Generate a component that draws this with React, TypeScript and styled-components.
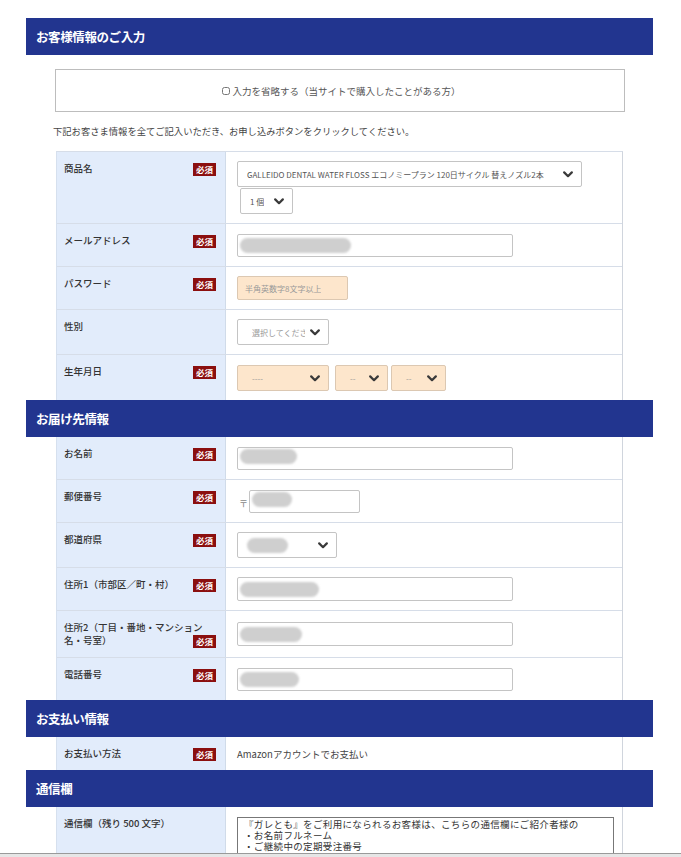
import React from "react"
import styled, { createGlobalStyle } from "styled-components"

const GlobalStyle = createGlobalStyle`
  html, body {
    margin: 0;
    padding: 0;
    background: #fff;
  }
  body {
    font-family: "Noto Sans CJK JP", "Noto Sans", sans-serif;
    color: #333;
  }
`;

function Chevron({ size = 10 }: { size?: number }) {
  return (
    <svg width={size} height={size * 0.7} viewBox="0 0 10 7">
      <path d="M1.2 1.4 L5 5.2 L8.8 1.4" fill="none" stroke="#3a3a3a" strokeWidth="2.2" strokeLinecap="round" strokeLinejoin="round" />
    </svg>
  )
}

function Badge() {
  return <Required>必須</Required>
}

interface Field {
  label: string;
  required?: boolean;
  compact?: boolean;
  content: React.ReactNode;
}

function FormRows({ fields, first }: { fields: Field[]; first?: boolean }) {
  return (
    <Table $first={first}>
      {fields.map((f, i) => (
        <Row key={i}>
          <LabelCell>
            {f.label}
            {f.required && <Badge />}
          </LabelCell>
          <ValueCell $compact={f.compact}>{f.content}</ValueCell>
        </Row>
      ))}
    </Table>
  )
}

export default function App() {
  const customer: Field[] = [
    {
      label: "商品名",
      required: true,
      content: (
        <>
          <SelectBox width={345} height={26}>
            <span>GALLEIDO DENTAL WATER FLOSS エコノミープラン 120日サイクル 替えノズル2本</span>
            <Chevron />
          </SelectBox>
          <SelectBox width={53} height={26} $shift={3} $top={1}>
            <span>1 個</span>
            <Chevron />
          </SelectBox>
        </>
      ),
    },
    {
      label: "メールアドレス",
      required: true,
      content: (
        <InputBox width={276} $top={1}>
          <Blur width={111} />
        </InputBox>
      ),
    },
    {
      label: "パスワード",
      required: true,
      content: (
        <InputBox width={111} height={24} $peach>
          <Placeholder>半角英数字8文字以上</Placeholder>
        </InputBox>
      ),
    },
    {
      label: "性別",
      content: (
        <SelectBox width={92} height={26}>
          <Placeholder>選択してください</Placeholder>
          <Chevron />
        </SelectBox>
      ),
    },
    {
      label: "生年月日",
      required: true,
      content: (
        <Inline>
          <SelectBox width={92} height={26} $peach $top={1}>
            <Placeholder>----</Placeholder>
            <Chevron />
          </SelectBox>
          <SelectBox width={53} height={26} $peach $shift={6} $top={1}>
            <Placeholder>--</Placeholder>
            <Chevron />
          </SelectBox>
          <SelectBox width={55} height={26} $peach $shift={3} $top={1}>
            <Placeholder>--</Placeholder>
            <Chevron />
          </SelectBox>
        </Inline>
      ),
    },
  ];

  const delivery: Field[] = [
    { label: "お名前", required: true, content: <InputBox width={276} $top={1}><Blur width={57} $raised /></InputBox> },
    {
      label: "郵便番号",
      required: true,
      content: (
        <Inline>
          <Postal>〒</Postal>
          <InputBox width={111} $top={1}><Blur width={40} $raised /></InputBox>
        </Inline>
      ),
    },
    {
      label: "都道府県",
      required: true,
      content: (
        <SelectBox width={100} height={26}>
          <Blur width={41} />
          <Chevron />
        </SelectBox>
      ),
    },
    { label: "住所1（市部区／町・村）", required: true, content: <InputBox width={276} height={24}><Blur width={79} /></InputBox> },
    { label: "住所2（丁目・番地・マンション名・号室）", required: true, content: <InputBox width={276} height={24} $top={2}><Blur width={62} /></InputBox> },
    { label: "電話番号", required: true, content: <InputBox width={276} $top={1}><Blur width={59} /></InputBox> },
  ];

  const payment: Field[] = [
    { label: "お支払い方法", required: true, compact: true, content: <PlainText>Amazonアカウントでお支払い</PlainText> },
  ];

  const memo: Field[] = [
    {
      label: "通信欄（残り 500 文字）",
      content: (
        <Memo
          readOnly
          defaultValue={"『ガレとも』をご利用になられるお客様は、こちらの通信欄にご紹介者様の\n・お名前フルネーム\n・ご継続中の定期受注番号\nの2点をご記入ください。"}
        />
      ),
    },
  ];

  return (
    <Page>
      <GlobalStyle />
      <SectionTitle>お客様情報のご入力</SectionTitle>
      <SkipBox>
        <Check type="checkbox" />
        入力を省略する（当サイトで購入したことがある方）
      </SkipBox>
      <Lead>下記お客さま情報を全てご記入いただき、お申し込みボタンをクリックしてください。</Lead>
      <FormRows fields={customer} first />
      <SectionTitle>お届け先情報</SectionTitle>
      <FormRows fields={delivery} />
      <SectionTitle>お支払い情報</SectionTitle>
      <FormRows fields={payment} />
      <SectionTitle>通信欄</SectionTitle>
      <FormRows fields={memo} />
      <BottomEdge />
    </Page>
  )
}

const Page = styled.div`
  width: 627px;
  padding: 18px 28px 0 26px;
  height: 839px;
  overflow: hidden;
`;

const SectionTitle = styled.div`
  background: #22358f;
  color: #fff;
  height: 37px;
  line-height: 37px;
  padding-left: 10px;
  font-size: 12.5px;
  font-weight: 700;
  letter-spacing: -0.4px;
`;

const SkipBox = styled.label`
  display: flex;
  align-items: center;
  justify-content: center;
  height: 41px;
  margin: 14px 28px 0 29px;
  border: 1px solid #bdbdbd;
  font-size: 9.5px;
  color: #555;
`;

const Check = styled.input`
  width: 8px;
  height: 8px;
  margin: 0 2px 0 3px;
`;

const Lead = styled.p`
  margin: 12px 0 0 27px;
  font-size: 9.3px;
  color: #444;
  line-height: 14px;
  height: 14px;
`;

const Table = styled.div<{ $first?: boolean }>`
  margin: ${(p) => (p.$first ? "13px" : "0")} 30px 0;
  border-top: ${(p) => (p.$first ? "1px solid #d6dde8" : "none")};
  border-right: 1px solid #d0d5dd;
  border-left: 1px solid #d6e0ee;
`;

const Row = styled.div`
  display: grid;
  grid-template-columns: 169px 1fr;
  border-bottom: 1px solid #d6dde8;
  &:last-child {
    border-bottom: none;
  }
`;

const LabelCell = styled.div`
  background: #e2ecfb;
  border-right: 1px solid #d0dbe9;
  padding: 10px 9px 9px 7px;
  font-size: 9.5px;
  line-height: 13px;
  font-weight: 500;
  color: #333;
`;

const Required = styled.span`
  float: right;
  background: #8b0f0f;
  color: #fff;
  font-size: 8.5px;
  font-weight: 700;
  line-height: 13px;
  padding: 0 3px;
  margin: 1px 0 0 4px;
`;

const ValueCell = styled.div<{ $compact?: boolean }>`
  padding: 9px 11px;
  display: flex;
  flex-direction: column;
  align-items: flex-start;
  justify-content: ${(p) => (p.$compact ? "center" : "flex-start")};
`;

const Inline = styled.div`
  display: flex;
  align-items: center;
`;

const SelectBox = styled.div<{ width: number; height: number; $peach?: boolean; $shift?: number; $top?: number }>`
  box-sizing: border-box;
  width: ${(p) => p.width}px;
  height: ${(p) => p.height}px;
  margin-left: ${(p) => p.$shift ?? 0}px;
  margin-top: ${(p) => p.$top ?? 0}px;
  display: flex;
  align-items: center;
  justify-content: space-between;
  padding: 0 8px 0 9px;
  gap: 5px;
  border: 1px solid ${(p) => (p.$peach ? "#dcc8b2" : "#c4c4c4")};
  border-radius: 2px;
  background: ${(p) => (p.$peach ? "#fde6cc" : "#fff")};
  font-size: 8px;
  color: #555;
  white-space: nowrap;
  overflow: hidden;
  flex: none;
  span {
    overflow: hidden;
  }
  svg {
    flex: none;
  }
`;

const InputBox = styled.div<{ width: number; height?: number; $peach?: boolean; $top?: number }>`
  box-sizing: border-box;
  width: ${(p) => p.width}px;
  height: ${(p) => p.height ?? 23}px;
  margin-top: ${(p) => p.$top ?? 0}px;
  display: flex;
  align-items: center;
  padding: 0 2px;
  border: 1px solid ${(p) => (p.$peach ? "#dcc8b2" : "#c4c4c4")};
  border-radius: 2px;
  background: ${(p) => (p.$peach ? "#fde6cc" : "#fff")};
  font-size: 8.5px;
  overflow: hidden;
`;

const Placeholder = styled.span`
  color: #999;
  font-size: 8px;
  white-space: nowrap;
  padding-left: 5px;
  overflow: hidden;
`;

const Blur = styled.span<{ width: number; $raised?: boolean }>`
  display: block;
  width: ${(p) => p.width}px;
  height: 15px;
  border-radius: 8px;
  background: #cfcfcf;
  filter: blur(0.8px);
  align-self: ${(p) => (p.$raised ? "flex-start" : "center")};
  margin-top: ${(p) => (p.$raised ? "1px" : "0")};
`;

const Postal = styled.span`
  font-size: 9px;
  color: #888;
  margin: 5px 0 0 2px;
  width: 10px;
`;

const PlainText = styled.div`
  font-size: 9.5px;
  color: #444;
  line-height: 14px;
`;

const Memo = styled.textarea`
  box-sizing: border-box;
  width: 377px;
  height: 70px;
  margin: 1px 0 0 0;
  padding: 1px 6px;
  border: 1px solid #777;
  border-radius: 0;
  font-family: "Noto Sans CJK JP", monospace;
  font-size: 9.5px;
  line-height: 11px;
  letter-spacing: 0.35px;
  color: #333;
  resize: none;
  overflow: hidden;
`;

const BottomEdge = styled.div`
  position: fixed;
  left: 0;
  right: 0;
  bottom: 0;
  height: 3px;
  background: #e6e6e6;
  border-top: 1px solid #9a9a9a;
`;
